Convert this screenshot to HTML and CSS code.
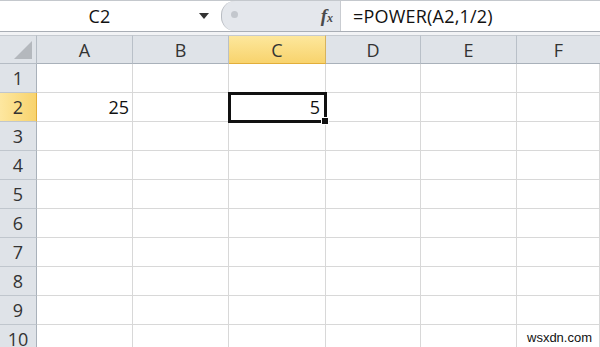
FILE: index.html
```html
<!DOCTYPE html>
<html>
<head>
<meta charset="utf-8">
<link rel="stylesheet" href="styles.css">
</head>
<body>
<div class="app">
  <div class="fbar">
    <div class="namebox">
      <span class="ref">C2</span>
      <span class="arrow"></span>
    </div>
    <div class="fxzone">
      <span class="knob"></span>
      <span class="fx"><i>f</i><i class="x">x</i></span>
    </div>
    <div class="formula">=POWER(A2,1/2)</div>
  </div>
  <div class="gap"></div>
  <div class="grid">
    <div class="corner"><span class="tri"></span></div>
    <div class="ch">A</div>
    <div class="ch">B</div>
    <div class="ch sel">C</div>
    <div class="ch">D</div>
    <div class="ch">E</div>
    <div class="ch last">F</div>

    <div class="rh">1</div><div class="c"></div><div class="c"></div><div class="c"></div><div class="c"></div><div class="c"></div><div class="c"></div>
    <div class="rh sel">2</div><div class="c num">25</div><div class="c"></div><div class="c num active">5<span class="handle"></span></div><div class="c"></div><div class="c"></div><div class="c"></div>
    <div class="rh">3</div><div class="c"></div><div class="c"></div><div class="c"></div><div class="c"></div><div class="c"></div><div class="c"></div>
    <div class="rh">4</div><div class="c"></div><div class="c"></div><div class="c"></div><div class="c"></div><div class="c"></div><div class="c"></div>
    <div class="rh">5</div><div class="c"></div><div class="c"></div><div class="c"></div><div class="c"></div><div class="c"></div><div class="c"></div>
    <div class="rh">6</div><div class="c"></div><div class="c"></div><div class="c"></div><div class="c"></div><div class="c"></div><div class="c"></div>
    <div class="rh">7</div><div class="c"></div><div class="c"></div><div class="c"></div><div class="c"></div><div class="c"></div><div class="c"></div>
    <div class="rh">8</div><div class="c"></div><div class="c"></div><div class="c"></div><div class="c"></div><div class="c"></div><div class="c"></div>
    <div class="rh">9</div><div class="c"></div><div class="c"></div><div class="c"></div><div class="c"></div><div class="c"></div><div class="c"></div>
    <div class="rh">10</div><div class="c"></div><div class="c"></div><div class="c"></div><div class="c"></div><div class="c"></div><div class="c"><span class="wm">wsxdn.com</span></div>
  </div>
</div>
</body>
</html>
```
FILE: styles.css
```css
html, body {
  margin: 0;
  padding: 0;
  background: #ffffff;
}
.app {
  width: 600px;
  height: 347px;
  overflow: hidden;
  font-family: "Open Sans", "Noto Sans", sans-serif;
  color: #222;
}
.fbar {
  display: flex;
  height: 30px;
  border-top: 1px solid #c4c8cd;
  border-bottom: 1px solid #a9aeb5;
  background: #fff;
}
.namebox {
  width: 221px;
  display: flex;
  align-items: center;
}
.ref {
  flex: 1;
  text-align: center;
  font-size: 18px;
  color: #111;
  letter-spacing: 0.3px;
}
.arrow {
  width: 0;
  height: 0;
  border-left: 5px solid transparent;
  border-right: 5px solid transparent;
  border-top: 6px solid #333;
  margin-right: 12px;
}
.fxzone {
  width: 120px;
  background: #e4e7ec;
  border-left: 1px solid #b8bcc2;
  border-radius: 14px 0 0 14px;
  display: flex;
  align-items: center;
  justify-content: space-between;
  padding: 0 4px 0 9px;
  box-sizing: border-box;
  border-right: 1px solid #c9ccd1;
}
.knob {
  width: 7px;
  height: 7px;
  border-radius: 50%;
  background: #c3c7cd;
  margin-top: -4px;
}
.fx {
  font-family: "Liberation Serif", serif;
  font-weight: bold;
  font-size: 19px;
  color: #4a4a4a;
  margin-right: 3px;
}
.fx i { font-style: italic; }
.fx .x { font-size: 12px; }
.formula {
  flex: 1;
  font-size: 18px;
  color: #111;
  padding-left: 12px;
  display: flex;
  align-items: center;
  letter-spacing: 0.2px;
}
.gap {
  height: 3px;
  background: #f2f3f5;
}
.grid {
  display: grid;
  grid-template-columns: 37px 96px 96px 97px 95px 96px 83px;
  grid-template-rows: 29px repeat(10, 29px);
}
.corner {
  background: #dfe3e8;
  border-right: 1px solid #b5bcc4;
  border-bottom: 1px solid #b5bcc4;
  border-top: 1px solid #c5cad0;
  position: relative;
}
.tri {
  position: absolute;
  right: 4px;
  bottom: 4px;
  width: 0;
  height: 0;
  border-left: 18px solid transparent;
  border-bottom: 18px solid #b4b8bd;
}
.ch {
  background: #dfe3e8;
  border-right: 1px solid #b9c0c8;
  border-bottom: 1px solid #a9b1ba;
  border-top: 1px solid #c5cad0;
  display: flex;
  align-items: center;
  justify-content: center;
  font-size: 18px;
  color: #333;
}
.ch.sel {
  background: linear-gradient(#fde79c, #f8d36d);
  border-bottom-color: #e2ae3a;
  border-right-color: #d7b35e;
}
.ch.last { border-right: none; }
.rh {
  background: #dfe3e8;
  border-right: 1px solid #a9b1ba;
  border-bottom: 1px solid #c0c6cd;
  display: flex;
  align-items: center;
  justify-content: center;
  font-size: 18px;
  color: #333;
}
.rh.sel {
  background: linear-gradient(90deg, #fde7a0, #f8d36d);
  border-right-color: #e2ae3a;
}
.c {
  border-right: 1px solid #d8d8d8;
  border-bottom: 1px solid #d8d8d8;
  position: relative;
}
.num {
  display: flex;
  align-items: center;
  justify-content: flex-end;
  padding-right: 3px;
  font-size: 18px;
  color: #111;
}
.active {
  outline: 3px solid #111;
  outline-offset: -2px;
  padding-right: 5px;
  z-index: 1;
}
.handle {
  position: absolute;
  right: -4px;
  bottom: -4px;
  width: 6px;
  height: 6px;
  background: #111;
  border: 1px solid #fff;
}
.wm {
  position: absolute;
  left: 10px;
  top: 5px;
  font-family: "Liberation Sans", sans-serif;
  font-size: 13px;
  color: #111;
}
```
